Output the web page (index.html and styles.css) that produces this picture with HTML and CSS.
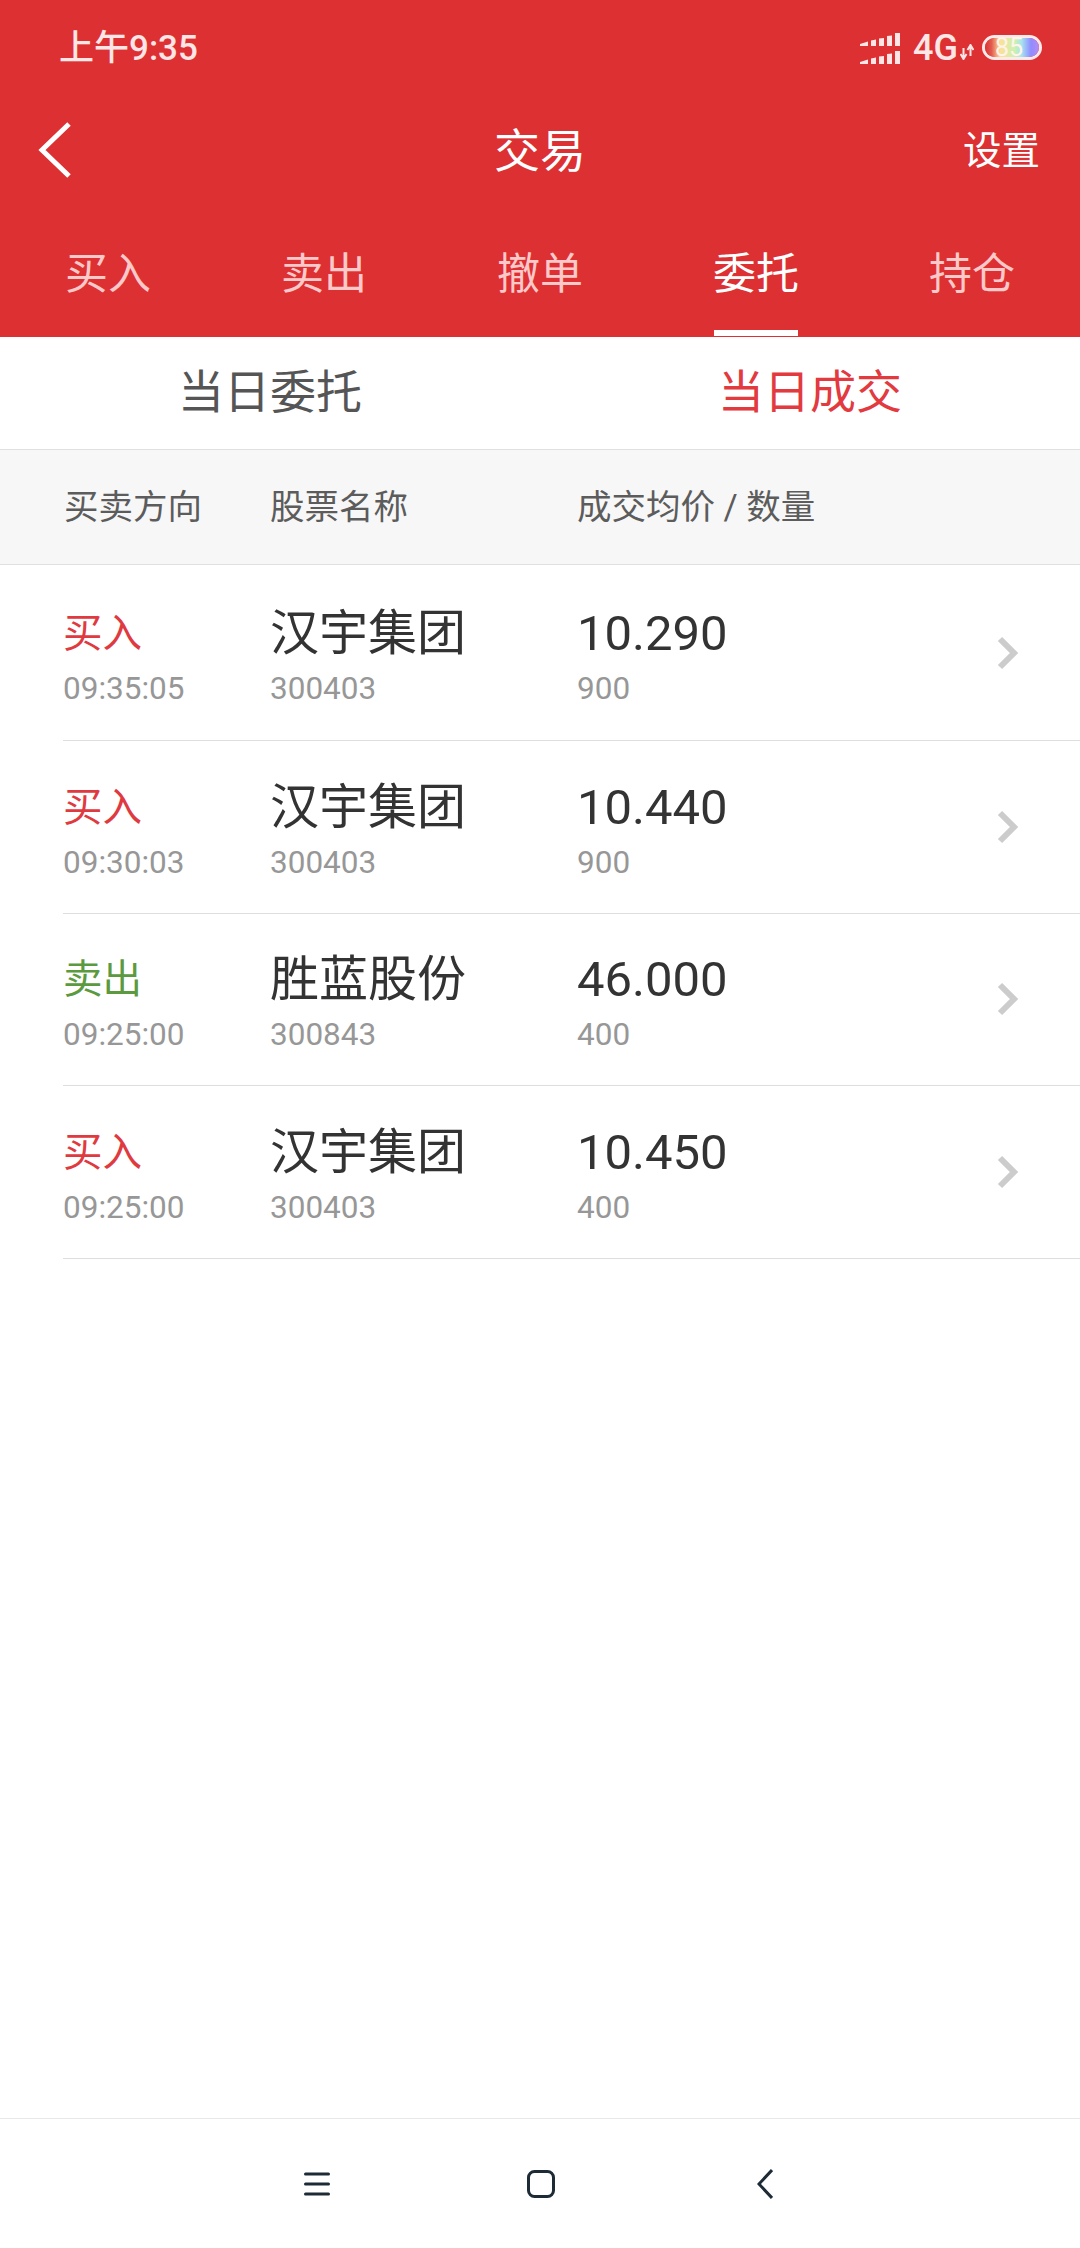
FILE: index.html
```html
<!DOCTYPE html>
<html lang="zh">
<head>
    <meta charset="UTF-8">
    <meta name="viewport" content="width=device-width, initial-scale=1.0">
    <title>交易</title>
    <link rel="stylesheet" href="styles.css">
</head>
<body>
    <div class="screen">
        <header class="top">
            <div class="status">
                <span class="clock">上午9:35</span>
                <div class="status-icons">
                    <svg class="signal" width="42" height="32" viewBox="0 0 42 32">
                        <path d="M0 11 8 8.500V13H0ZM11 7.500 16 6.500V13H11ZM19 5.500 24 5V13H19ZM27 3 32 2.500V13H27ZM35 0H40V13H35Z"/>
                        <path d="M0 29 8 26.500V31H0ZM11 25.500 16 24.500V31H11ZM19 23.500 24 23V31H19ZM27 21 32 20.500V31H27ZM35 18H40V31H35Z"/>
                    </svg>
                    <span class="net">4G</span>
                    <svg class="updown" width="14" height="16" viewBox="0 0 14 16">
                        <path d="M3.500 4V15M0.500 10 3.500 15 6.500 10M10.500 12V1M7.500 6 10.500 1 13.500 6" fill="none" stroke="#ffe6e6" stroke-width="2"/>
                    </svg>
                    <div class="battery"><div class="battery-fill"></div><span class="battery-num">85</span></div>
                </div>
            </div>
            <div class="titlebar">
                <svg class="back" width="36" height="56" viewBox="0 0 36 56">
                    <path d="M32 2 5 28 32 54" fill="none" stroke="#fff" stroke-width="5"/>
                </svg>
                <h1 class="title">交易</h1>
                <span class="settings">设置</span>
            </div>
            <nav class="tabs">
                <a class="tab">买入</a>
                <a class="tab">卖出</a>
                <a class="tab">撤单</a>
                <a class="tab active">委托</a>
                <a class="tab">持仓</a>
            </nav>
        </header>

        <div class="subtabs">
            <span class="subtab">当日委托</span>
            <span class="subtab active">当日成交</span>
        </div>

        <div class="table-head">
            <span>买卖方向</span>
            <span>股票名称</span>
            <span>成交均价 / 数量</span>
        </div>

        <ul class="deals">
            <li class="deal">
                <div class="cell"><span class="side buy">买入</span><span class="sub">09:35:05</span></div>
                <div class="cell"><span class="name">汉宇集团</span><span class="sub">300403</span></div>
                <div class="cell"><span class="price">10.290</span><span class="sub">900</span></div>
                <svg class="chev" width="22" height="34" viewBox="0 0 22 34"><path d="M3 3 17 17 3 31" fill="none" stroke="#cccccc" stroke-width="6"/></svg>
            </li>
            <li class="deal">
                <div class="cell"><span class="side buy">买入</span><span class="sub">09:30:03</span></div>
                <div class="cell"><span class="name">汉宇集团</span><span class="sub">300403</span></div>
                <div class="cell"><span class="price">10.440</span><span class="sub">900</span></div>
                <svg class="chev" width="22" height="34" viewBox="0 0 22 34"><path d="M3 3 17 17 3 31" fill="none" stroke="#cccccc" stroke-width="6"/></svg>
            </li>
            <li class="deal">
                <div class="cell"><span class="side sell">卖出</span><span class="sub">09:25:00</span></div>
                <div class="cell"><span class="name">胜蓝股份</span><span class="sub">300843</span></div>
                <div class="cell"><span class="price">46.000</span><span class="sub">400</span></div>
                <svg class="chev" width="22" height="34" viewBox="0 0 22 34"><path d="M3 3 17 17 3 31" fill="none" stroke="#cccccc" stroke-width="6"/></svg>
            </li>
            <li class="deal">
                <div class="cell"><span class="side buy">买入</span><span class="sub">09:25:00</span></div>
                <div class="cell"><span class="name">汉宇集团</span><span class="sub">300403</span></div>
                <div class="cell"><span class="price">10.450</span><span class="sub">400</span></div>
                <svg class="chev" width="22" height="34" viewBox="0 0 22 34"><path d="M3 3 17 17 3 31" fill="none" stroke="#cccccc" stroke-width="6"/></svg>
            </li>
        </ul>

        <footer class="navbar">
            <svg width="26" height="24" viewBox="0 0 26 24"><path d="M1.500 2H24.500M1.500 12H24.500M1.500 22H24.500" fill="none" stroke="#1c2b36" stroke-width="3" stroke-linecap="round"/></svg>
            <svg width="28" height="28" viewBox="0 0 28 28"><rect x="1.500" y="1.500" width="25" height="25" rx="6" fill="none" stroke="#1c2b36" stroke-width="3"/></svg>
            <svg width="16" height="30" viewBox="0 0 16 30"><path d="M15 1 2 15 15 29" fill="none" stroke="#1c2b36" stroke-width="3"/></svg>
        </footer>
    </div>
</body>
</html>
```

FILE: styles.css
```css
* {
    box-sizing: border-box;
}
body {
    margin: 0;
    background-color: white;
    font-family: Roboto, "Noto Sans CJK SC", sans-serif;
    color: #333333;
}
.screen {
    width: 1080px;
    height: 2248px;
    display: flex;
    flex-direction: column;
    overflow: hidden;
}

/* red header */
.top {
    height: 337px;
    flex: none;
    background-color: #dd3033;
    color: white;
}
.status {
    height: 88px;
    padding: 0 38px 0 59px;
    display: flex;
    align-items: center;
    justify-content: space-between;
}
.clock {
    font-size: 35px;
    font-weight: 500;
    color: #ffe6e6;
}
.status-icons {
    display: flex;
    align-items: center;
    margin-top: 6px;
}
.signal {
    fill: #ffe6e6;
    margin-top: 4px;
}
.net {
    font-size: 36px;
    font-weight: 500;
    margin: 2px 0 0 11px;
    color: #ffe6e6;
}
.updown {
    margin: 10px 8px 0 2px;
}
.battery {
    position: relative;
    width: 60px;
    height: 25px;
    border: 3px solid #ffe9e9;
    border-radius: 13px;
}
.battery-fill {
    height: 100%;
    width: 100%;
    border-radius: 10px;
    background: linear-gradient(90deg, #dd3033 0, #e25a50 12%, #ffdf9a 28%, #c9f2b0 55%, #a6e3f0 68%, #8f8cff 85%, #b58cf0 100%);
}
.battery-num {
    position: absolute;
    left: 10px;
    top: -4px;
    font-size: 25px;
    line-height: 27px;
    color: #fff4e8;
}
.titlebar {
    height: 118px;
    padding: 0 40px 0 37px;
    display: flex;
    align-items: center;
    justify-content: space-between;
    position: relative;
}
.back {
    margin-top: 6px;
}
.title {
    position: absolute;
    left: 0;
    right: 0;
    margin: 0;
    text-align: center;
    font-size: 46px;
    font-weight: 400;
}
.settings {
    font-size: 38.500px;
}
.tabs {
    display: flex;
    height: 131px;
}
.tab {
    flex: 1;
    display: flex;
    justify-content: center;
    align-items: center;
    font-size: 43px;
    color: #ffc9c9;
    padding-bottom: 4px;
    position: relative;
}
.tab.active {
    color: white;
}
.tab.active::after {
    content: "";
    position: absolute;
    left: 66px;
    right: 66px;
    bottom: 1px;
    height: 6px;
    background-color: white;
}

/* today's orders / deals switch */
.subtabs {
    height: 113px;
    flex: none;
    display: flex;
    border-bottom: 1px solid #e0e0e0;
}
.subtab {
    flex: 1;
    text-align: center;
    font-size: 46px;
    line-height: 110px;
    color: #555555;
}
.subtab.active {
    color: #e23a3f;
}

.table-head {
    height: 115px;
    flex: none;
    display: grid;
    grid-template-columns: 206px 307px 1fr;
    align-items: center;
    padding: 0 0 6px 64px;
    background-color: #f7f7f7;
    border-bottom: 1px solid #e0e0e0;
    font-size: 34.500px;
    color: #5c5c5c;
}

.deals {
    list-style-type: none;
    margin: 0;
    padding: 0 0 0 63px;
    flex: 1;
}
.deal {
    height: 172.600px;
    display: grid;
    grid-template-columns: 207px 307px 1fr 22px;
    align-items: center;
    padding-right: 61px;
    border-bottom: 1px solid #dedede;
}
.deal:first-child {
    height: 176px;
}
.cell {
    display: flex;
    flex-direction: column;
    padding-top: 6px;
}
.side {
    font-size: 39.500px;
    line-height: 66px;
}
.side.buy {
    color: #df3a3f;
}
.side.sell {
    color: #5b9a3e;
}
.name {
    font-size: 49px;
    line-height: 66px;
    color: #333333;
}
.price {
    font-size: 49px;
    line-height: 66px;
    color: #333333;
}
.sub {
    font-size: 31.500px;
    line-height: 44px;
    color: #979797;
}

.navbar {
    height: 130px;
    flex: none;
    border-top: 1px solid #e8e8e8;
    display: grid;
    grid-template-columns: repeat(3, 1fr);
    padding: 0 203px 0 205px;
    align-items: center;
    justify-items: center;
}
```
